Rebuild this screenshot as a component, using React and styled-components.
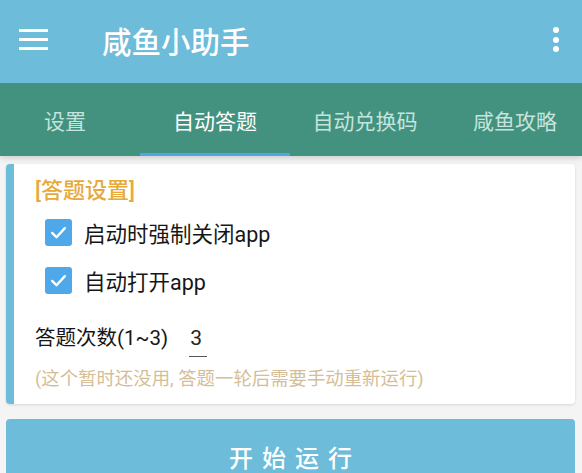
import React, { useState } from "react";
import styled, { createGlobalStyle } from "styled-components";

const GlobalStyle = createGlobalStyle`
  html, body {
    margin: 0;
    padding: 0;
    background: #f4f4f4;
  }
  body {
    font-family: Roboto, "Noto Sans CJK SC", "Noto Sans", sans-serif;
  }
`;

const tabs = ["设置", "自动答题", "自动兑换码", "咸鱼攻略"];

const App = () => {
  const [activeTab, setActiveTab] = useState(1);
  const [forceClose, setForceClose] = useState(true);
  const [autoOpen, setAutoOpen] = useState(true);
  const [times, setTimes] = useState("3");

  return (
    <Page>
      <GlobalStyle />
      <Header>
        <AppBar>
          <MenuButton>
            <span />
            <span />
            <span />
          </MenuButton>
          <Title>咸鱼小助手</Title>
          <MoreButton>
            <i />
            <i />
            <i />
          </MoreButton>
        </AppBar>
        <TabBar>
          <TabRow>
            {tabs.map((t, i) => (
              <Tab key={t} $active={i === activeTab} onClick={() => setActiveTab(i)}>
                {t}
              </Tab>
            ))}
          </TabRow>
        </TabBar>
      </Header>

      <Content>
        <Card>
          <SectionTitle>[答题设置]</SectionTitle>
          <CheckRow onClick={() => setForceClose(!forceClose)}>
            <CheckBox $checked={forceClose}>
              {forceClose && <CheckMark />}
            </CheckBox>
            <CheckLabel>启动时强制关闭app</CheckLabel>
          </CheckRow>
          <CheckRow onClick={() => setAutoOpen(!autoOpen)}>
            <CheckBox $checked={autoOpen}>
              {autoOpen && <CheckMark />}
            </CheckBox>
            <CheckLabel>自动打开app</CheckLabel>
          </CheckRow>
          <FieldRow>
            <FieldLabel>答题次数(1~3)</FieldLabel>
            <NumberInput value={times} onChange={(e) => setTimes(e.target.value)} />
          </FieldRow>
          <Hint>(这个暂时还没用, 答题一轮后需要手动重新运行)</Hint>
        </Card>
        <StartButton>开始运行</StartButton>
      </Content>
    </Page>
  );
};

const CheckMark = () => (
  <svg width="19" height="19" viewBox="0 0 24 24">
    <path
      d="M4 12.5 L9.5 18 L20 6.5"
      fill="none"
      stroke="#fff"
      strokeWidth="3"
      strokeLinecap="round"
      strokeLinejoin="round"
    />
  </svg>
);

const Page = styled.div`
  width: 582px;
  height: 473px;
  overflow: hidden;
  background: #f4f4f4;
`;

const Header = styled.div`
  position: relative;
  z-index: 1;
  box-shadow: 0 2px 6px rgba(0, 0, 0, 0.16);
`;

const AppBar = styled.div`
  height: 83px;
  background: #6cbcda;
  display: flex;
  align-items: center;
  padding: 0 20px 0 19px;
`;

const MenuButton = styled.div`
  width: 29px;
  display: flex;
  flex-direction: column;
  gap: 6px;
  margin-top: -4px;

  span {
    display: block;
    height: 3px;
    background: #fff;
  }
`;

const Title = styled.div`
  margin-left: 54px;
  flex: 1;
  color: #fff;
  font-size: 29.5px;
  font-weight: 500;
  margin-top: -4px;
`;

const MoreButton = styled.div`
  display: flex;
  flex-direction: column;
  gap: 3.3px;
  margin-top: -4px;
  margin-right: 3px;

  i {
    display: block;
    width: 6px;
    height: 6px;
    border-radius: 50%;
    background: #fff;
  }
`;

const TabBar = styled.div`
  height: 73px;
  background: #43927f;
  overflow: hidden;
`;

const TabRow = styled.div`
  display: flex;
  height: 100%;
  margin-left: -10px;
`;

const Tab = styled.div`
  flex: 0 0 150px;
  display: flex;
  align-items: center;
  justify-content: center;
  box-sizing: border-box;
  font-size: 21px;
  color: ${(p) => (p.$active ? "#ffffff" : "#c4e4dc")};
  border-bottom: 3px solid ${(p) => (p.$active ? "#4ea6e2" : "transparent")};
  padding-top: 3px;
  cursor: pointer;
`;

const Content = styled.div`
  padding: 8px 7px 0 6px;
  display: flex;
  flex-direction: column;
  gap: 15px;
`;

const Card = styled.div`
  background: #fff;
  border-left: 8px solid #6cbcda;
  border-radius: 4px;
  box-shadow: 0 1px 3px rgba(0, 0, 0, 0.12);
  padding: 12px 16px 13px 21px;
  display: flex;
  flex-direction: column;
`;

const SectionTitle = styled.div`
  color: #e6a93a;
  font-size: 22px;
  font-weight: 500;
  line-height: 30px;
  margin-bottom: 2px;
`;

const CheckRow = styled.div`
  height: 48px;
  display: flex;
  align-items: center;
  padding-left: 10px;
  gap: 12px;
  cursor: pointer;
`;

const CheckBox = styled.div`
  width: 27px;
  height: 27px;
  border-radius: 3px;
  box-sizing: border-box;
  background: ${(p) => (p.$checked ? "#4ea8ea" : "#fff")};
  border: ${(p) => (p.$checked ? "none" : "2px solid #777")};
  display: flex;
  align-items: center;
  justify-content: center;
`;

const CheckLabel = styled.div`
  font-size: 21.5px;
  color: #161616;
`;

const FieldRow = styled.div`
  height: 48px;
  margin-top: 8px;
  display: flex;
  align-items: center;
  gap: 21px;
`;

const FieldLabel = styled.div`
  font-size: 20.5px;
  color: #161616;
`;

const NumberInput = styled.input`
  width: 17px;
  border: none;
  border-bottom: 1px solid #555;
  outline: none;
  padding: 0 0 6px 1px;
  margin-top: 10px;
  background: transparent;
  font-family: inherit;
  font-size: 21px;
  color: #222;
  text-align: left;
`;

const Hint = styled.div`
  font-size: 18.4px;
  line-height: 24px;
  color: #d5be97;
  margin-top: 7px;
`;

const StartButton = styled.button`
  height: 74px;
  border: none;
  border-radius: 4px;
  background: #6cbcda;
  color: #fff;
  font-family: inherit;
  font-size: 24px;
  font-weight: 500;
  letter-spacing: 9px;
  text-indent: 9px;
  cursor: pointer;
`;

export default App;
